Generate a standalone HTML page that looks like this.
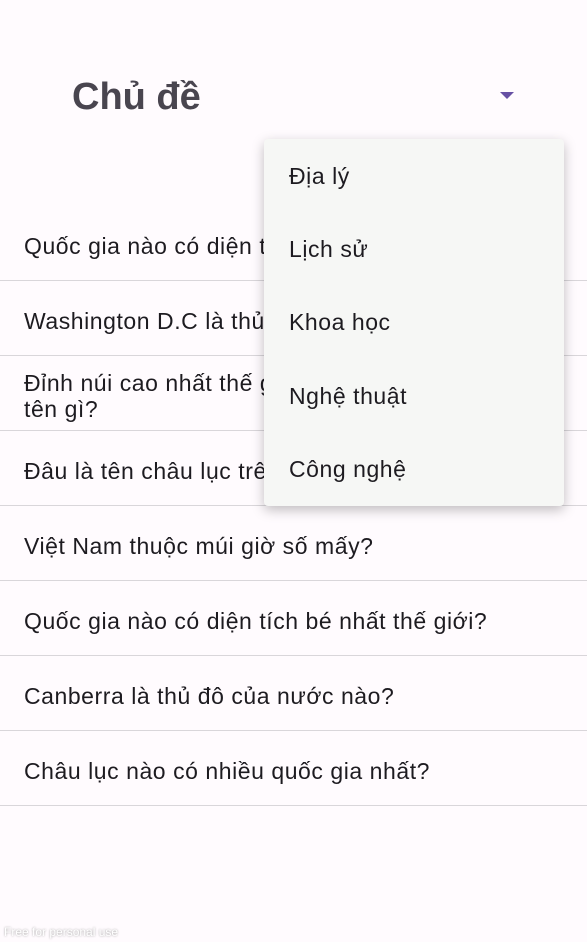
<!DOCTYPE html>
<html><head><meta charset="utf-8"><style>
body{margin:0;width:587px;height:942px;background:#fffbfe;font-family:"Liberation Sans",sans-serif;position:relative;overflow:hidden;color:#1d1b20}
.t{position:absolute;left:72px;top:76px;font-size:38px;font-weight:bold;color:#49454f}
.tri{position:absolute;left:500px;top:92px;width:0;height:0;border-left:7px solid transparent;border-right:7px solid transparent;border-top:7px solid #6750a4}
.row{position:absolute;left:0;width:587px;height:75px;border-bottom:1.5px solid #d9d6da;box-sizing:border-box;font-size:23px;letter-spacing:0.55px;display:flex;align-items:center;padding-left:24px;padding-top:5px;line-height:26px}
.menu{position:absolute;left:264px;top:139px;width:300px;height:367px;background:#f6f7f5;border-radius:4px;box-shadow:0 4px 12px rgba(0,0,0,.25)}
.mi{position:absolute;left:25px;font-size:23px;letter-spacing:0.55px;color:#1d1b20}
.wm{position:absolute;left:4px;top:925px;font-size:12px;color:#fff;text-shadow:0 0 2px #999}
</style></head><body>
<div class="t">Chủ đề</div>
<div class="tri"></div>
<div class="row" style="top:206px">Quốc gia nào có diện tích lớn nhất thế giới?</div>
<div class="row" style="top:281px">Washington D.C là thủ đô của nước nào?</div>
<div class="row" style="top:356px">Đỉnh núi cao nhất thế giới<br>tên gì?</div>
<div class="row" style="top:431px">Đâu là tên châu lục trên thế giới?</div>
<div class="row" style="top:506px">Việt Nam thuộc múi giờ số mấy?</div>
<div class="row" style="top:581px">Quốc gia nào có diện tích bé nhất thế giới?</div>
<div class="row" style="top:656px">Canberra là thủ đô của nước nào?</div>
<div class="row" style="top:731px">Châu lục nào có nhiều quốc gia nhất?</div>
<div class="menu">
<div class="mi" style="top:24px">Địa lý</div>
<div class="mi" style="top:97px">Lịch sử</div>
<div class="mi" style="top:170px">Khoa học</div>
<div class="mi" style="top:244px">Nghệ thuật</div>
<div class="mi" style="top:317px">Công nghệ</div>
</div>
<div class="wm">Free for personal use</div>
</body></html>
